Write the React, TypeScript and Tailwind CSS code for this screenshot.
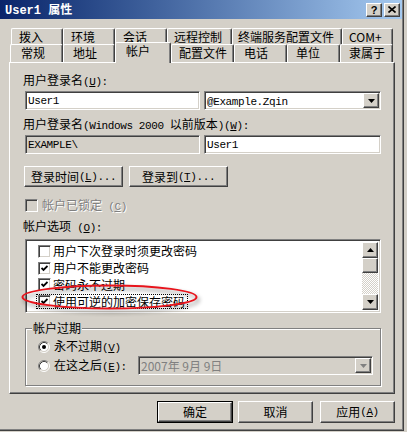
import React from 'react';

const FONT = "font-['Noto_Sans_CJK_SC',sans-serif]";
const RAISED =
  'border border-t-white border-l-white border-r-[#404040] border-b-[#404040] shadow-[inset_-1px_-1px_0_#808080] bg-[#d4d0c8]';
const SUNKEN =
  'border border-t-[#808080] border-l-[#808080] border-r-white border-b-white shadow-[inset_1px_1px_0_#404040,inset_-1px_-1px_0_#d4d0c8]';

const ROW1 = [
  { label: '拨入', w: 'w-[52px]', pl: 'pl-[7px]' },
  { label: '环境', w: 'w-[52px]', pl: 'pl-[7px]' },
  { label: '会话', w: 'w-[52px]', pl: 'pl-[7px]' },
  { label: '远程控制', w: 'w-[65px]', pl: 'pl-[6px]' },
  { label: '终端服务配置文件', w: 'w-[110px]', pl: 'pl-[5px]' },
  { label: 'COM+', w: 'w-[51px]', pl: 'pl-[6px]' },
];

const ROW2 = [
  { label: '常规', w: 'w-[53px]', pl: 'pl-[10px]' },
  { label: '地址', w: 'w-[52px]', pl: 'pl-[9px]' },
  { label: '帐户', w: 'w-[56px]', pl: 'pl-[10px]', active: true },
  { label: '配置文件', w: 'w-[63px]', pl: 'pl-[7px]' },
  { label: '电话', w: 'w-[53px]', pl: 'pl-[9px]' },
  { label: '单位', w: 'w-[53px]', pl: 'pl-[8px]' },
  { label: '隶属于', w: 'w-[53px]', pl: 'pl-[8px]' },
];

const OPTIONS = [
  { label: '用户下次登录时须更改密码', checked: false },
  { label: '用户不能更改密码', checked: true },
  { label: '密码永不过期', checked: true },
  { label: '使用可逆的加密保存密码', checked: true, focus: true },
];

// half-width latin, like the dialog's SimSun ascii
function Lat({ children }: { children: React.ReactNode }) {
  return <span className="font-['Liberation_Mono',monospace] text-[11px] tracking-[-0.4px]">{children}</span>;
}

function Key({ c }: { c: string }) {
  return <span className="underline underline-offset-[1px]">{c}</span>;
}

function Arrow({ dir = 'down', color = '#000' }: { dir?: 'up' | 'down'; color?: string }) {
  return (
    <svg width="7" height="4" viewBox="0 0 7 4">
      {dir === 'up' ? <polygon points="3.5,0 7,4 0,4" fill={color} /> : <polygon points="0,0 7,0 3.5,4" fill={color} />}
    </svg>
  );
}

function Check() {
  return (
    <svg width="7" height="7" viewBox="0 0 7 7">
      <polyline points="0.5,3 2.5,5 6.5,1" fill="none" stroke="#000" strokeWidth="1.8" />
    </svg>
  );
}

function CheckBox({ checked, disabled }: { checked?: boolean; disabled?: boolean }) {
  return (
    <div
      className={`w-[13px] h-[13px] shrink-0 flex items-center justify-center ${SUNKEN} ${disabled ? 'bg-[#d4d0c8]' : 'bg-white'}`}
    >
      {checked && <Check />}
    </div>
  );
}

function Radio({ checked }: { checked?: boolean }) {
  return (
    <svg width="12" height="12" viewBox="0 0 12 12" className="shrink-0">
      <circle cx="6" cy="6" r="4.5" fill="#fff" />
      <path d="M2.11 9.89 A5.5 5.5 0 0 1 9.89 2.11" fill="none" stroke="#808080" />
      <path d="M9.89 2.11 A5.5 5.5 0 0 1 2.11 9.89" fill="none" stroke="#fff" />
      <path d="M2.82 9.18 A4.5 4.5 0 0 1 9.18 2.82" fill="none" stroke="#404040" />
      <path d="M9.18 2.82 A4.5 4.5 0 0 1 2.82 9.18" fill="none" stroke="#d4d0c8" />
      {checked && <circle cx="6" cy="6" r="2" fill="#000" />}
    </svg>
  );
}

function Tab({ label, w, pl, active }: { label: string; w: string; pl: string; active?: boolean }) {
  return (
    <div
      className={`${w} ${pl} ${active ? 'h-[21px] -mb-px relative z-10' : 'h-[18px]'} shrink-0 border-t border-l border-r border-t-white border-l-white border-r-[#404040] shadow-[inset_-1px_0_0_#808080] rounded-t-[2px] bg-[#d4d0c8] pt-[2px] leading-[12px] whitespace-nowrap`}
    >
      {label}
    </div>
  );
}

function Button({ children, w, def }: { children: React.ReactNode; w: string; def?: boolean }) {
  if (def) {
    return (
      <div className={`${w} h-[22px] border border-black flex`}>
        <div className={`flex-1 flex items-center justify-center leading-[12px] ${RAISED}`}>{children}</div>
      </div>
    );
  }
  return <div className={`${w} h-[22px] flex items-center justify-center leading-[12px] ${RAISED}`}>{children}</div>;
}

export default function App() {
  return (
    <div className={`relative w-[407px] h-[432px] bg-[#d4d0c8] overflow-hidden text-[12px] text-black ${FONT}`}>
      <div className="w-[404px] h-[431px] border-r border-b border-r-[#404040] border-b-[#404040] shadow-[inset_-1px_-1px_0_#808080] flex flex-col">
        {/* Title bar */}
        <div className="h-[19px] mr-[1px] flex items-center pl-[5px] pr-[2px] bg-linear-to-r from-[#0a246a] to-[#a6caf0]">
          <span className="text-white font-bold text-[12px] leading-[12px]">
            <span className="font-['Liberation_Mono',monospace]">User1 </span>属性
          </span>
          <div className="flex-1" />
          <div className={`w-[16px] h-[14px] flex items-center justify-center ${RAISED}`}>
            <span className="font-bold text-[11px] leading-[10px] font-['Liberation_Sans',sans-serif]">?</span>
          </div>
          <div className={`ml-[2px] w-[16px] h-[14px] flex items-center justify-center ${RAISED}`}>
            <svg width="8" height="7" viewBox="0 0 8 7">
              <path d="M0.5 0.5 L7.5 6.5 M7.5 0.5 L0.5 6.5" stroke="#000" strokeWidth="1.6" />
            </svg>
          </div>
        </div>

        {/* Tabs */}
        <div className="mt-[9px] flex pl-[11px] h-[18px]">
          {ROW1.map(t => (
            <Tab key={t.label} {...t} />
          ))}
        </div>
        <div className="-mt-[4px] flex items-end pl-[10px] h-[20px]">
          {ROW2.map(t => (
            <Tab key={t.label} {...t} />
          ))}
        </div>

        {/* Panel */}
        <div className="ml-[9px] w-[386px] h-[332px] border border-t-white border-l-white border-r-[#404040] border-b-[#404040] shadow-[inset_-1px_-1px_0_#808080] flex flex-col pl-[13px]">
          <div className="mt-[11px] leading-[12px]">
            用户登录名<Lat>(<Key c="U" />):</Lat>
          </div>
          <div className="mt-[3px] ml-[2px] flex gap-[4px]">
            <div className={`w-[175px] h-[19px] bg-white flex items-center pl-[2px] leading-[12px] ${SUNKEN}`}>
              <Lat>User1</Lat>
            </div>
            <div className={`w-[177px] h-[19px] bg-white flex items-center pl-[2px] leading-[12px] ${SUNKEN}`}>
              <span className="flex-1">
                <Lat>@Example.Zqin</Lat>
              </span>
              <div className={`w-[16px] h-[15px] mr-[1px] flex items-center justify-center ${RAISED}`}>
                <Arrow />
              </div>
            </div>
          </div>
          <div className="mt-[8px] leading-[12px]">
            用户登录名<Lat>(Windows 2000 </Lat>以前版本<Lat>)(<Key c="W" />):</Lat>
          </div>
          <div className="mt-[3px] ml-[2px] flex gap-[4px]">
            <div className={`w-[175px] h-[19px] bg-[#d4d0c8] flex items-center pl-[2px] leading-[12px] ${SUNKEN}`}>
              <Lat>EXAMPLE\</Lat>
            </div>
            <div className={`w-[177px] h-[19px] bg-white flex items-center pl-[2px] leading-[12px] ${SUNKEN}`}>
              <Lat>User1</Lat>
            </div>
          </div>
          <div className="mt-[12px] ml-[1px] flex gap-[6px]">
            <div className={`w-[99px] h-[21px] flex items-center justify-center leading-[12px] ${RAISED}`}>
              登录时间<Lat> (<Key c="L" />)...</Lat>
            </div>
            <div className={`w-[99px] h-[21px] flex items-center justify-center leading-[12px] ${RAISED}`}>
              登录到<Lat>(<Key c="T" />)...</Lat>
            </div>
          </div>
          <div className="mt-[12px] ml-[2px] flex items-center gap-[4px] h-[13px]">
            <CheckBox disabled />
            <span className="text-[#808080] leading-[12px] [text-shadow:1px_1px_0_#ffffff]">
              帐户已锁定<Lat> (<Key c="C" />)</Lat>
            </span>
          </div>
          <div className="mt-[8px] leading-[12px]">
            帐户选项<Lat> (<Key c="O" />):</Lat>
          </div>

          {/* List box */}
          <div className={`mt-[5px] ml-[2px] w-[356px] h-[74px] bg-white flex p-[2px] ${SUNKEN}`}>
            <div className="flex-1 flex flex-col pt-[1px]">
              {OPTIONS.map(o => (
                <div key={o.label} className="h-[17px] flex items-center pl-[8px]">
                  <div
                    className={`h-[15px] flex items-center gap-[2px] pl-[1px] pr-[2px] border ${o.focus ? 'border-dotted border-black' : 'border-transparent'}`}
                  >
                    <CheckBox checked={o.checked} />
                    <span className="leading-[12px] whitespace-nowrap">{o.label}</span>
                  </div>
                </div>
              ))}
            </div>
            <div className="w-[16px] flex flex-col">
              <div className={`h-[16px] flex items-center justify-center ${RAISED}`}>
                <Arrow dir="up" />
              </div>
              <div className={`h-[15px] ${RAISED}`} />
              <div className="flex-1 bg-[repeating-conic-gradient(#ffffff_0%_25%,#d4d0c8_0%_50%)] bg-[length:2px_2px]" />
              <div className={`h-[16px] flex items-center justify-center ${RAISED}`}>
                <Arrow />
              </div>
            </div>
          </div>

          {/* Account expiry group */}
          <div className="mt-[15px] ml-[2px] w-[356px] h-[58px] border border-[#808080] shadow-[1px_1px_0_#ffffff,inset_1px_1px_0_#ffffff] flex flex-col">
            <div className="-mt-[7px] ml-[6px] w-fit px-[1px] bg-[#d4d0c8] leading-[12px]">帐户过期</div>
            <div className="mt-[6px] pl-[12px] flex items-center gap-[4px] h-[13px]">
              <Radio checked />
              <span className="leading-[12px]">
                永不过期<Lat>(<Key c="V" />)</Lat>
              </span>
            </div>
            <div className="mt-[3px] pl-[12px] flex items-center gap-[4px] h-[19px]">
              <Radio />
              <span className="w-[80px] leading-[12px]">
                在这之后<Lat>(<Key c="E" />):</Lat>
              </span>
              <div className={`w-[235px] h-[19px] flex items-center pl-[2px] bg-[#d4d0c8] ${SUNKEN}`}>
                <span className="flex-1 text-[#808080] leading-[12px]">2007年 9月 9日</span>
                <div className={`w-[16px] h-[15px] mr-[1px] flex items-center justify-center ${RAISED}`}>
                  <Arrow color="#808080" />
                </div>
              </div>
            </div>
          </div>
        </div>

        {/* Bottom buttons */}
        <div className="mt-[7px] ml-[157px] flex">
          <Button w="w-[76px]" def>
            确定
          </Button>
          <div className="ml-[5px]">
            <Button w="w-[75px]">取消</Button>
          </div>
          <div className="ml-[7px]">
            <Button w="w-[75px]">
              应用<Lat> (<Key c="A" />)</Lat>
            </Button>
          </div>
        </div>
      </div>

      {/* Red annotation ellipse */}
      <svg
        className="absolute left-[18px] top-[281px] drop-shadow-[2px_3px_2px_rgba(0,0,0,0.45)]"
        width="200"
        height="36"
        viewBox="0 0 200 36"
      >
        <ellipse cx="91.5" cy="16" rx="87" ry="11.5" fill="none" stroke="#e8141c" strokeWidth="2" />
      </svg>
    </div>
  );
}
